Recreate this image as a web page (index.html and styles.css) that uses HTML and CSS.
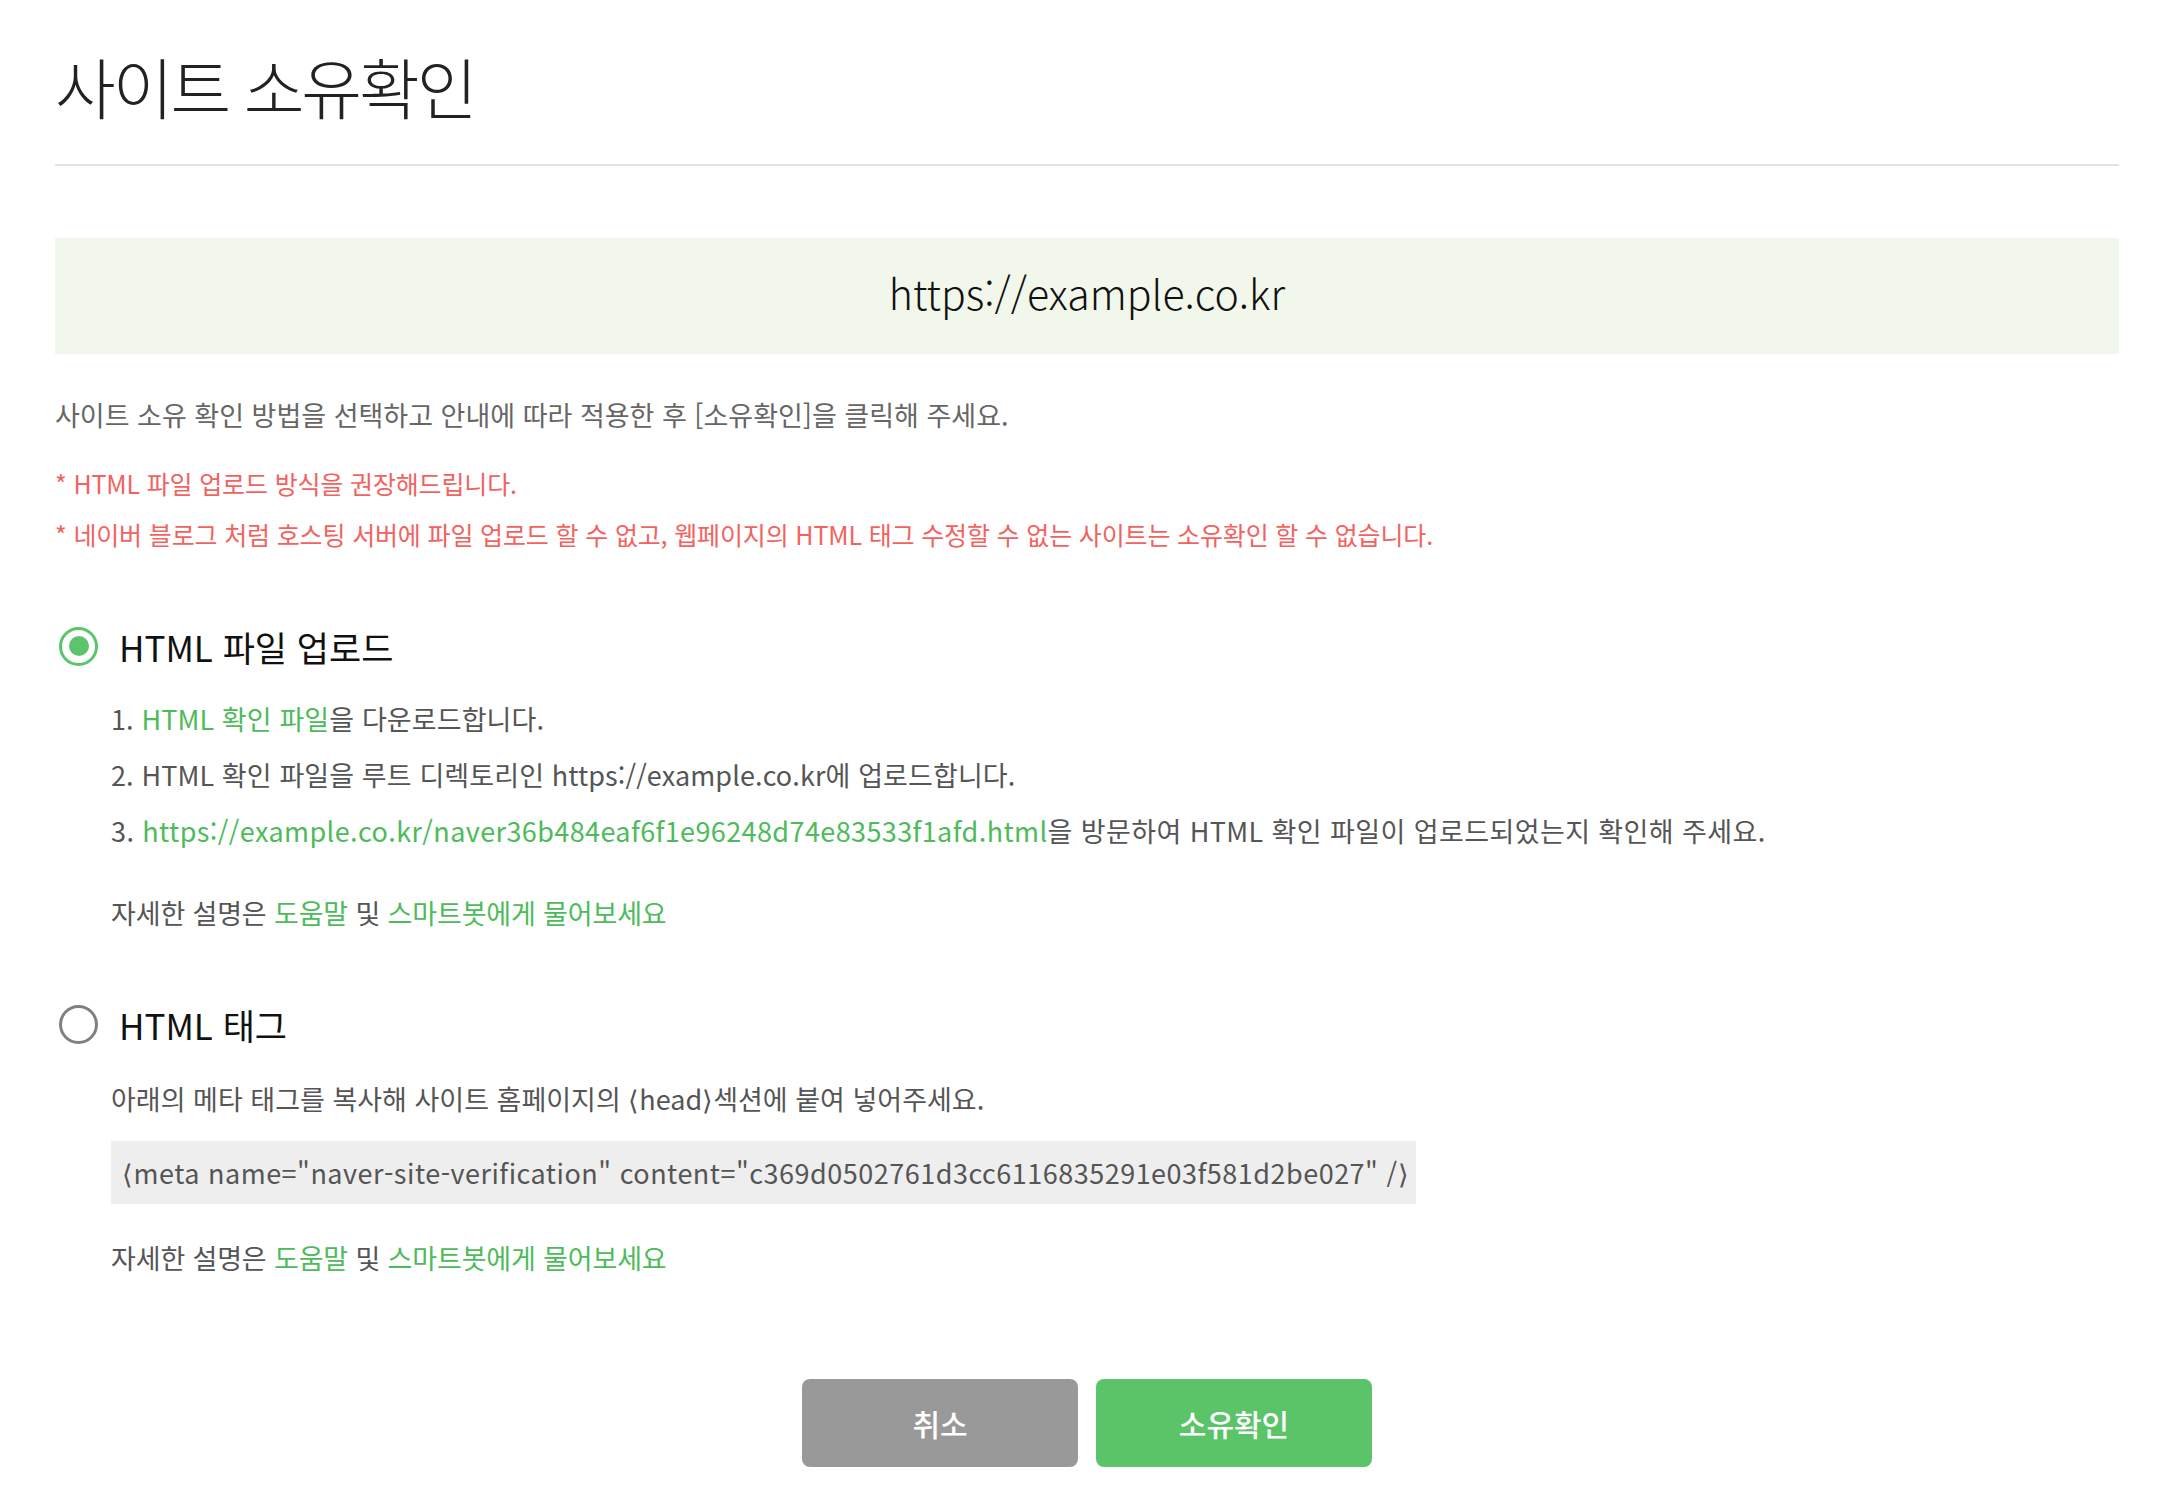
FILE: index.html
```html
<!DOCTYPE html>
<html lang="ko">
<head>
<meta charset="utf-8">
<title>사이트 소유확인</title>
<link rel="stylesheet" href="styles.css">
</head>
<body>
<div class="page">
  <div class="title-bar">
    <h1 class="title">사이트 소유확인</h1>
  </div>

  <div class="site-box"><span class="site-url">https://example.co.kr</span></div>

  <p class="intro">사이트 소유 확인 방법을 선택하고 안내에 따라 적용한 후 [소유확인]을 클릭해 주세요.</p>

  <div class="notices">
    <p class="notice">* HTML 파일 업로드 방식을 권장해드립니다.</p>
    <p class="notice">* 네이버 블로그 처럼 호스팅 서버에 파일 업로드 할 수 없고, 웹페이지의 HTML 태그 수정할 수 없는 사이트는 소유확인 할 수 없습니다.</p>
  </div>

  <section class="method method-file">
    <div class="method-head">
      <span class="radio radio-on"></span>
      <span class="method-title">HTML 파일 업로드</span>
    </div>
    <ol class="steps">
      <li>1. <a class="link">HTML 확인 파일</a>을 다운로드합니다.</li>
      <li>2. HTML 확인 파일을 루트 디렉토리인 https://example.co.kr에 업로드합니다.</li>
      <li class="step-long">3. <a class="link">https://example.co.kr/naver36b484eaf6f1e96248d74e83533f1afd.html</a>을 방문하여 HTML 확인 파일이 업로드되었는지 확인해 주세요.</li>
    </ol>
    <p class="help">자세한 설명은 <a class="link">도움말</a> 및 <a class="link">스마트봇에게 물어보세요</a></p>
  </section>

  <section class="method method-tag">
    <div class="method-head">
      <span class="radio"></span>
      <span class="method-title">HTML 태그</span>
    </div>
    <p class="desc">아래의 메타 태그를 복사해 사이트 홈페이지의 ⟨head⟩섹션에 붙여 넣어주세요.</p>
    <div class="code">⟨meta name="naver-site-verification" content="c369d0502761d3cc6116835291e03f581d2be027" /⟩</div>
    <p class="help help-tag">자세한 설명은 <a class="link">도움말</a> 및 <a class="link">스마트봇에게 물어보세요</a></p>
  </section>

  <div class="actions">
    <button class="btn btn-cancel">취소</button>
    <button class="btn btn-ok">소유확인</button>
  </div>
</div>
</body>
</html>
```

FILE: styles.css
```css
* { box-sizing: border-box; }

html, body {
  margin: 0;
  padding: 0;
  background: #ffffff;
}

body {
  font-family: "Noto Sans CJK KR", "Noto Sans", sans-serif;
  color: #666666;
}

.page {
  padding: 0 39px 40px 55px;
}

.title-bar {
  padding-top: 44px;
  padding-bottom: 38px;
  border-bottom: 2px solid #e2e2e2;
}

.title {
  margin: 0;
  font-size: 66px;
  line-height: 82px;
  font-weight: 300;
  color: #222222;
  letter-spacing: -3px;
}

.site-box {
  margin-top: 72px;
  height: 116px;
  background: #f1f7ea;
  display: flex;
  align-items: center;
  justify-content: center;
}

.site-url {
  font-size: 41px;
  font-weight: 300;
  color: #111111;
  margin-bottom: 8px;
}

.intro {
  margin: 41px 0 0;
  font-size: 27px;
  line-height: 40px;
  color: #666666;
  letter-spacing: 0;
}

.notices {
  margin-top: 23px;
}

.notice {
  margin: 0;
  font-size: 25px;
  line-height: 51px;
  color: #f2625f;
  letter-spacing: -0.15px;
}

.method-file {
  margin-top: 66px;
}

.method-tag {
  margin-top: 71px;
}

.method-head {
  display: flex;
  align-items: center;
  height: 40px;
  padding-left: 4px;
}

.radio {
  width: 39px;
  height: 39px;
  border-radius: 50%;
  border: 3px solid #808080;
  display: flex;
  align-items: center;
  justify-content: center;
  flex: none;
}

.radio-on {
  border-color: #5cc46a;
}

.radio-on::after {
  content: "";
  width: 20px;
  height: 20px;
  border-radius: 50%;
  background: #5cc46a;
}

.method-title {
  margin-left: 21px;
  font-size: 35px;
  color: #111111;
  letter-spacing: 0;
}

.steps {
  list-style: none;
  margin: 25px 0 0;
  padding: 0 0 0 56px;
}

.steps li {
  font-size: 27px;
  line-height: 56px;
  color: #555555;
  letter-spacing: 0.1px;
}

.steps .step-long {
  letter-spacing: 0.4px;
}

.link {
  color: #4dbb5a;
  text-decoration: none;
}

.help {
  margin: 34px 0 0;
  padding-left: 56px;
  font-size: 27px;
  line-height: 40px;
  color: #555555;
  letter-spacing: -0.15px;
}

.help-tag {
  margin-top: 34px;
}

.desc {
  margin: 35px 0 0;
  padding-left: 56px;
  font-size: 27px;
  line-height: 40px;
  color: #555555;
  letter-spacing: 0;
}

.code {
  display: inline-block;
  margin: 22px 0 0 56px;
  height: 63px;
  line-height: 63px;
  padding: 0 7px 0 11px;
  background: #eeeeee;
  font-size: 27px;
  color: #555555;
  letter-spacing: 0.5px;
  white-space: nowrap;
}

.actions {
  margin-top: 101px;
  display: flex;
  justify-content: center;
  gap: 18px;
}

.btn {
  width: 276px;
  height: 88px;
  border: none;
  border-radius: 8px;
  font-family: "Noto Sans CJK KR", sans-serif;
  font-size: 30px;
  font-weight: 500;
  color: #ffffff;
  cursor: pointer;
}

.btn-cancel {
  background: #999999;
}

.btn-ok {
  background: #5bc468;
}
```
